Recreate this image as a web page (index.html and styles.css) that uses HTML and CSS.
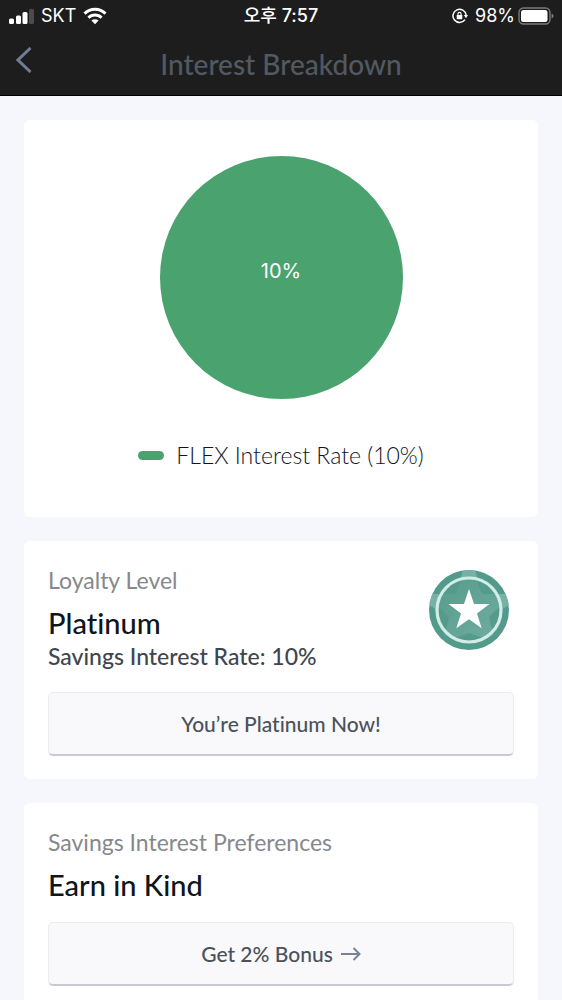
FILE: index.html
```html
<!DOCTYPE html>
<html lang="en">
<head>
  <meta charset="UTF-8" />
  <meta name="viewport" content="width=device-width, initial-scale=1.0" />
  <title>Interest Breakdown</title>
  <link rel="stylesheet" href="styles.css">
</head>
<body>

  <!-- === Top Bar === -->
  <header class="topbar">
    <div class="status">
      <div class="status-left">
        <svg width="26" height="18" viewBox="0 0 26 18" fill="#fff">
          <rect x="1" y="11.500" width="5" height="5.500" rx="1.5" />
          <rect x="8" y="8.500" width="5" height="8.500" rx="1.5" />
          <rect x="14.500" y="5" width="5" height="12" rx="1.5" />
          <rect x="21" y="2" width="5" height="15" rx="1.5" fill="#4b4b4b" />
        </svg>
        <span>SKT</span>
        <svg width="24" height="18" viewBox="0 0 24 18" fill="none" stroke="#fff" stroke-width="3">
          <path d="M1.5 6.6a15 15 0 0 1 21 0" />
          <path d="M5.4 10.7a9.4 9.4 0 0 1 13.2 0" />
          <path d="M12 17.2l-3.6-3.6a5.2 5.2 0 0 1 7.2 0z" fill="#fff" stroke="none" />
        </svg>
      </div>
      <div class="status-time">오후 7:57</div>
      <div class="status-right">
        <svg width="16" height="16" viewBox="0 0 16 16" fill="none" stroke="#fff" stroke-width="1.5">
          <path d="M13 11.6A6.6 6.6 0 1 1 14.1 7" />
          <path d="M11.8 7h4.2l-2 3.2z" fill="#fff" stroke="none" />
          <rect x="4.7" y="7" width="5.6" height="4.2" rx=".6" fill="#fff" stroke="none" />
          <path d="M5.9 7.4V6a1.6 1.6 0 0 1 3.2 0v1.4" stroke-width="1.1" />
        </svg>
        <div class="battery">
          <span>98%</span>
          <svg width="36" height="18" viewBox="0 0 36 18">
            <rect x="1" y="1" width="31" height="16" rx="4.5" fill="none" stroke="#7b7b7b" stroke-width="1.4" />
            <rect x="3" y="3" width="26.5" height="12" rx="2.5" fill="#fff" />
            <path d="M33.6 6.5q2 .8 2 2.5t-2 2.5z" fill="#7b7b7b" />
          </svg>
        </div>
      </div>
    </div>
    <div class="navbar">
      <button class="back-btn" aria-label="Back">
        <svg width="16" height="26" viewBox="0 0 16 26" fill="none" stroke="#6f7d91" stroke-width="3">
          <path d="M14.5 1L2 13l12.500 12" />
        </svg>
      </button>
      <h1>Interest Breakdown</h1>
    </div>
  </header>

  <main class="content">
    <!-- === Rate Chart === -->
    <section class="card chart-card">
      <div class="pie">10%</div>
      <div class="legend"><span class="legend-mark"></span>FLEX Interest Rate (10%)</div>
    </section>

    <!-- === Loyalty Level === -->
    <section class="card">
      <div class="card-head">
        <div>
          <p class="label">Loyalty Level</p>
          <h2>Platinum</h2>
          <p class="rate">Savings Interest Rate: 10%</p>
        </div>
        <svg class="badge" width="80" height="80" viewBox="0 0 80 80">
          <defs>
            <linearGradient id="starFill" x1="0" y1="0" x2="1" y2="1">
              <stop offset="0" stop-color="#549c8d" />
              <stop offset="1" stop-color="#71aca0" />
            </linearGradient>
            <clipPath id="disc"><circle cx="40" cy="40" r="40" /></clipPath>
          </defs>
          <g clip-path="url(#disc)">
            <rect width="80" height="80" fill="#529a8b" />
            <path d="M34 0h12l7 24h27v11L60 47H20L0 35V24h27z" fill="#77b1a5" />
          </g>
          <circle cx="40" cy="40" r="32" fill="#549b8c" />
          <path d="M33 9h14l6 15h17l2 11-12 12 4 18-7 4-17-6-17 6-7-4 4-18L8 35l2-11h17z" fill="url(#starFill)" />
          <circle cx="40" cy="40" r="32" fill="none" stroke="#d2ece6" stroke-width="3.2" />
          <path d="M40 19l5 15h15.500L48 43.500l4.700 14.800L40 49.200l-12.700 9.100L32 43.500 19.500 34H35z" fill="#fff" />
        </svg>
      </div>
      <button class="btn">You’re Platinum Now!</button>
    </section>

    <!-- === Interest Preferences === -->
    <section class="card">
      <p class="label">Savings Interest Preferences</p>
      <h2>Earn in Kind</h2>
      <button class="btn">
        Get 2% Bonus
        <svg width="20" height="14" viewBox="0 0 20 14" fill="none" stroke="#768396" stroke-width="2">
          <path d="M0 7h18.500M12.500 1l6 6-6 6" />
        </svg>
      </button>
    </section>
  </main>

</body>
</html>
```
FILE: styles.css
```css
/* Basic Resets */
* { margin: 0; padding: 0; box-sizing: border-box; }
body {
  background-color: #f6f7fc;
  color: #10151c;
  font-family: Lato, "Noto Sans CJK KR", sans-serif;
  font-size: 23px;
  line-height: 30px;
  font-variant-ligatures: none;
}
svg { display: block; flex-shrink: 0; }
button { font-family: inherit; font-variant-ligatures: none; cursor: pointer; }

/* === Top Bar === */
.topbar {
  height: 96px;
  background-color: #1d1d1d;
  border-bottom: 1px solid #000;
}
.status {
  display: grid;
  grid-template-columns: 1fr auto 1fr;
  align-items: center;
  height: 32px;
  padding: 0 8px;
  font-family: Inter, "Noto Sans CJK KR", sans-serif;
  font-size: 18px;
  color: #fff;
}
.status-left,
.status-right {
  display: flex;
  align-items: center;
  gap: 7px;
}
.status-right { justify-content: flex-end; }
.status-time { font-weight: 500; }
.battery {
  display: flex;
  align-items: center;
  gap: 3px;
}
.navbar {
  display: grid;
  grid-template-columns: 40px 1fr 40px;
  align-items: start;
  padding: 0 16px;
}
.back-btn {
  background: none;
  border: none;
  padding-top: 15px;
  justify-self: start;
}
.navbar h1 {
  padding-top: 16px;
  font-size: 28px;
  line-height: 32px;
  font-weight: 500;
  text-align: center;
  color: #515962;
}

/* === Cards === */
.content {
  display: flex;
  flex-direction: column;
  gap: 24px;
  padding: 24px;
}
.card {
  background-color: #fff;
  border-radius: 6px;
  padding: 24px 24px 23px;
}
.card h2 {
  margin-top: 12px;
  font-size: 29px;
  line-height: 32px;
  font-weight: 500;
}
.label { color: #85888c; }
.rate {
  margin-top: 2px;
  font-weight: 500;
  color: #3f464e;
}
.card-head {
  display: flex;
  justify-content: space-between;
}
.badge { margin: 5px 5px 0 0; }
.btn {
  display: flex;
  align-items: center;
  justify-content: center;
  gap: 8px;
  width: 100%;
  height: 64px;
  margin-top: 21px;
  background-color: #f9f9fc;
  border: 1px solid #ececef;
  border-bottom: 2px solid #c9c9cf;
  border-radius: 5px;
  font-size: 21px;
  font-weight: 500;
  color: #4a525b;
}

/* === Chart === */
.chart-card {
  display: flex;
  flex-direction: column;
  align-items: center;
  padding: 36px 24px 47px;
}
.pie {
  display: flex;
  align-items: center;
  justify-content: center;
  width: 243px;
  height: 243px;
  padding-bottom: 14px;
  border-radius: 50%;
  background-color: #4aa36f;
  font-family: Inter, sans-serif;
  font-size: 20px;
  color: #fff;
}
.legend {
  display: flex;
  align-items: center;
  gap: 12px;
  margin-top: 41px;
  font-weight: 300;
}
.legend-mark {
  width: 26px;
  height: 9px;
  border-radius: 5px;
  background-color: #4aa36f;
}
```
